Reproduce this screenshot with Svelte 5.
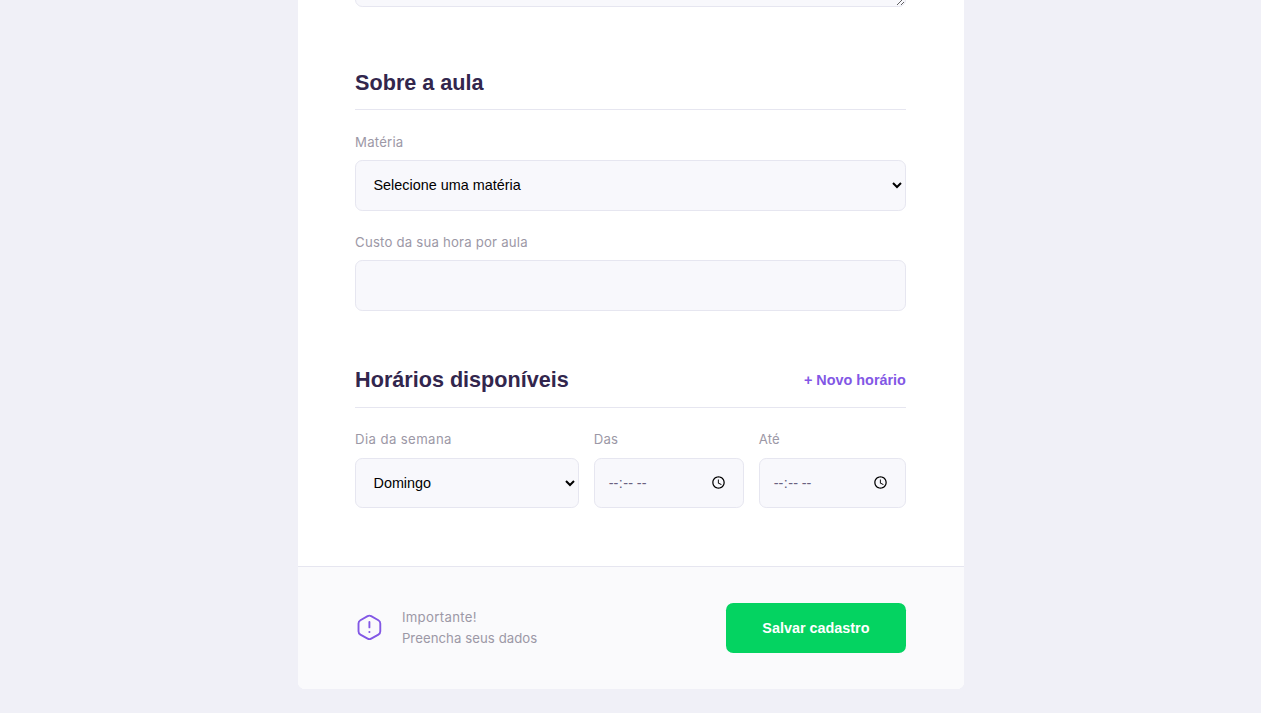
<script>
  let subject = $state('');
  let cost = $state('');
  let bio = $state('');
  let slots = $state([{ day: '0', from: '', to: '' }]);

  const subjects = ['Artes', 'Biologia', 'Ciências', 'Física', 'Matemática', 'Português'];
  const days = ['Domingo', 'Segunda-feira', 'Terça-feira', 'Quarta-feira', 'Quinta-feira', 'Sexta-feira', 'Sábado'];

  function addSlot() {
    slots.push({ day: '0', from: '', to: '' });
  }
</script>

<main>
  <form onsubmit={(e) => e.preventDefault()}>
    <textarea bind:value={bio}></textarea>

    <section class="about">
      <header><h2>Sobre a aula</h2></header>
      <div class="field">
        <label for="subject">Matéria</label>
        <select id="subject" bind:value={subject}>
          <option value="" disabled hidden>Selecione uma matéria</option>
          {#each subjects as s}<option value={s}>{s}</option>{/each}
        </select>
      </div>
      <div class="field">
        <label for="cost">Custo da sua hora por aula</label>
        <input id="cost" bind:value={cost} />
      </div>
    </section>

    <section class="schedule">
      <header>
        <h2>Horários disponíveis</h2>
        <button type="button" class="add" onclick={addSlot}>+ Novo horário</button>
      </header>
      {#each slots as slot, i}
        <div class="slot">
          <div class="field">
            <label class="wide" for="day{i}">Dia da semana</label>
            <select id="day{i}" bind:value={slot.day}>
              {#each days as d, n}<option value={String(n)}>{d}</option>{/each}
            </select>
          </div>
          <div class="field">
            <label for="from{i}">Das</label>
            <input class="from" id="from{i}" type="time" bind:value={slot.from} />
          </div>
          <div class="field">
            <label for="to{i}">Até</label>
            <input id="to{i}" type="time" bind:value={slot.to} />
          </div>
        </div>
      {/each}
    </section>

    <footer>
      <div class="notice">
        <svg viewBox="0 0 32 32" fill="none" stroke="#8257e5" stroke-width="2.1" stroke-linecap="round" stroke-linejoin="round">
          <path d="M14 3.5a4.2 4.2 0 0 1 4 0l8 4.5a4.2 4.2 0 0 1 2.1 3.7v8.6a4.2 4.2 0 0 1-2.1 3.7l-8 4.5a4.2 4.2 0 0 1-4 0l-8-4.5a4.2 4.2 0 0 1-2.1-3.7v-8.6a4.2 4.2 0 0 1 2.1-3.7z" />
          <path d="M16 10v6" />
          <circle cx="16" cy="21.1" r="1.15" fill="#8257e5" stroke="none" />
        </svg>
        <p><span class="title">Importante!</span><br />Preencha seus dados</p>
      </div>
      <button type="submit" class="save">Salvar cadastro</button>
    </footer>
  </form>
</main>

<style>
  :global(html) { background: #f0f0f7; }
  :global(body) { overflow: hidden; }

  main {
    height: 713px;
    overflow: hidden;
    background: #f0f0f7;
    color: #9c98a6;
    font: 13.2px/21px Inter, sans-serif;
  }

  form {
    width: 666px;
    margin: 0 auto;
    background: #fff;
    border-radius: 0 0 7.2px 7.2px;
    overflow: hidden;
    display: flex;
    flex-direction: column;
  }

  textarea, input, select, button { font: 14.4px "Liberation Sans", Arial, sans-serif; }

  textarea, input, select {
    box-sizing: border-box;
    display: block;
    width: 100%;
    height: 50.4px;
    margin: 0;
    padding: 0 14.4px;
    background: #f8f8fc;
    border: 1px solid #e6e6f0;
    border-radius: 7.2px;
    outline: 0;
  }

  select { padding: 0 0 0 13.4px; color: #000; }
  input { color: #6a6180; }
  input[type='time'] { padding: 0 13.6px; }
  input.from { padding-right: 14.6px; }
  input::-webkit-datetime-edit-hour-field,
  input::-webkit-datetime-edit-minute-field,
  input::-webkit-datetime-edit-ampm-field { padding: 0 0.5px; }

  textarea {
    width: 550.8px;
    height: 270px;
    margin: -263px 57.6px 0;
    resize: vertical;
  }

  section { padding: 64px 57.6px 0; }
  .schedule { padding: 57.6px 57.6px 58px; }

  header {
    display: flex;
    align-items: center;
    justify-content: space-between;
    height: 24px;
    padding-bottom: 14.4px;
    margin-bottom: 21.6px;
    border-bottom: 1px solid #e6e6f0;
  }

  h2 {
    margin: 0;
    color: #32264d;
    font: 700 21.6px/24px "Liberation Sans", Arial, sans-serif;
  }

  .add {
    padding: 0;
    border: 0;
    background: none;
    color: #8257e5;
    font-weight: 700;
    cursor: pointer;
  }

  .field + .field { margin-top: 21.6px; }
  .slot .field + .field { margin-top: 0; }
  label {
    display: block;
    height: 21px;
    margin-bottom: 7.2px;
    letter-spacing: 0.2px;
    white-space: nowrap;
  }
  label.wide { letter-spacing: 0.38px; }

  .slot {
    display: grid;
    grid-template-columns: 224.2px 150.6px 147.2px;
    column-gap: 14.4px;
  }
  .slot + .slot { margin-top: 21.6px; }

  footer {
    display: flex;
    align-items: center;
    justify-content: space-between;
    padding: 36px 57.6px;
    background: #fafafc;
    border-top: 1px solid #e6e6f0;
  }

  .notice { display: flex; align-items: center; gap: 18px; }
  .notice svg { width: 28.8px; height: 28.8px; margin-top: -1.2px; }
  p { margin: 0; letter-spacing: 0.06px; }
  .title { letter-spacing: 0.32px; }

  .save {
    width: 180px;
    height: 50.4px;
    padding: 0;
    border: 0;
    border-radius: 7.2px;
    background: #04d361;
    color: #fff;
    font-weight: 700;
    cursor: pointer;
  }
</style>
